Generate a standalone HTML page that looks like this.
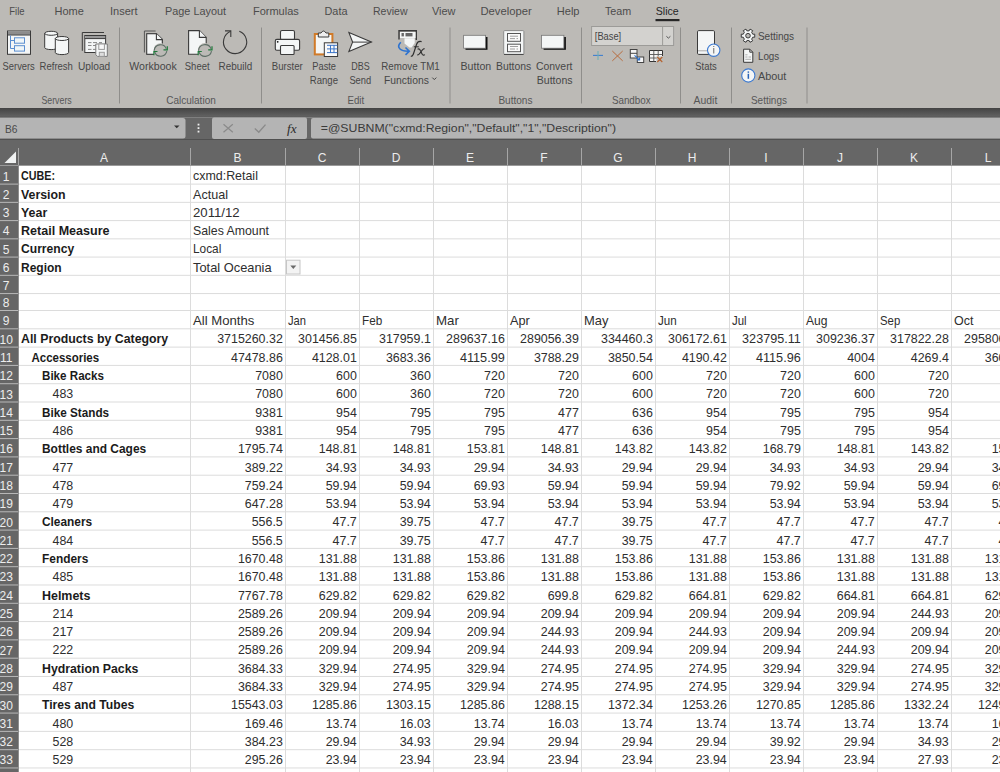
<!DOCTYPE html><html><head><meta charset="utf-8"><style>html,body{margin:0;padding:0;overflow:hidden;background:#fff}svg{display:block}text{font-family:"Liberation Sans",sans-serif}</style></head><body>
<svg width="1000" height="772" viewBox="0 0 1000 772">
<rect x="0" y="0" width="1000" height="108" fill="#bcbab6"/>
<text x="9.25" y="14.90" font-size="11" fill="#4c4c4c" font-weight="normal" textLength="15.25" lengthAdjust="spacingAndGlyphs">File</text>
<text x="54.50" y="14.90" font-size="11" fill="#4c4c4c" font-weight="normal" textLength="29.30" lengthAdjust="spacingAndGlyphs">Home</text>
<text x="110.00" y="14.90" font-size="11" fill="#4c4c4c" font-weight="normal" textLength="27.50" lengthAdjust="spacingAndGlyphs">Insert</text>
<text x="165.00" y="14.90" font-size="11" fill="#4c4c4c" font-weight="normal" textLength="61.00" lengthAdjust="spacingAndGlyphs">Page Layout</text>
<text x="253.00" y="14.90" font-size="11" fill="#4c4c4c" font-weight="normal" textLength="45.75" lengthAdjust="spacingAndGlyphs">Formulas</text>
<text x="324.50" y="14.90" font-size="11" fill="#4c4c4c" font-weight="normal" textLength="23.00" lengthAdjust="spacingAndGlyphs">Data</text>
<text x="373.00" y="14.90" font-size="11" fill="#4c4c4c" font-weight="normal" textLength="34.50" lengthAdjust="spacingAndGlyphs">Review</text>
<text x="432.00" y="14.90" font-size="11" fill="#4c4c4c" font-weight="normal" textLength="23.50" lengthAdjust="spacingAndGlyphs">View</text>
<text x="480.50" y="14.90" font-size="11" fill="#4c4c4c" font-weight="normal" textLength="51.25" lengthAdjust="spacingAndGlyphs">Developer</text>
<text x="556.75" y="14.90" font-size="11" fill="#4c4c4c" font-weight="normal" textLength="22.75" lengthAdjust="spacingAndGlyphs">Help</text>
<text x="605.00" y="14.90" font-size="11" fill="#4c4c4c" font-weight="normal" textLength="26.25" lengthAdjust="spacingAndGlyphs">Team</text>
<text x="655.75" y="14.90" font-size="11" fill="#262626" font-weight="normal" textLength="23.00" lengthAdjust="spacingAndGlyphs">Slice</text>
<rect x="655.5" y="19" width="24" height="2.2" fill="#262626"/>
<text x="2.60" y="69.80" font-size="10.5" fill="#474747" font-weight="normal" textLength="32.20" lengthAdjust="spacingAndGlyphs">Servers</text>
<text x="39.60" y="69.80" font-size="10.5" fill="#474747" font-weight="normal" textLength="33.30" lengthAdjust="spacingAndGlyphs">Refresh</text>
<text x="78.00" y="69.80" font-size="10.5" fill="#474747" font-weight="normal" textLength="32.20" lengthAdjust="spacingAndGlyphs">Upload</text>
<text x="129.30" y="69.80" font-size="10.5" fill="#474747" font-weight="normal" textLength="47.40" lengthAdjust="spacingAndGlyphs">Workbook</text>
<text x="184.80" y="69.80" font-size="10.5" fill="#474747" font-weight="normal" textLength="24.80" lengthAdjust="spacingAndGlyphs">Sheet</text>
<text x="218.60" y="69.80" font-size="10.5" fill="#474747" font-weight="normal" textLength="33.60" lengthAdjust="spacingAndGlyphs">Rebuild</text>
<text x="271.80" y="69.80" font-size="10.5" fill="#474747" font-weight="normal" textLength="31.00" lengthAdjust="spacingAndGlyphs">Burster</text>
<text x="312.30" y="69.80" font-size="10.5" fill="#474747" font-weight="normal" textLength="23.70" lengthAdjust="spacingAndGlyphs">Paste</text>
<text x="309.80" y="83.80" font-size="10.5" fill="#474747" font-weight="normal" textLength="28.20" lengthAdjust="spacingAndGlyphs">Range</text>
<text x="351.30" y="69.80" font-size="10.5" fill="#474747" font-weight="normal" textLength="18.40" lengthAdjust="spacingAndGlyphs">DBS</text>
<text x="349.40" y="83.80" font-size="10.5" fill="#474747" font-weight="normal" textLength="21.80" lengthAdjust="spacingAndGlyphs">Send</text>
<text x="381.30" y="69.80" font-size="10.5" fill="#474747" font-weight="normal" textLength="58.40" lengthAdjust="spacingAndGlyphs">Remove TM1</text>
<text x="384.00" y="83.80" font-size="10.5" fill="#474747" font-weight="normal" textLength="44.80" lengthAdjust="spacingAndGlyphs">Functions</text>
<text x="460.50" y="69.80" font-size="10.5" fill="#474747" font-weight="normal" textLength="30.70" lengthAdjust="spacingAndGlyphs">Button</text>
<text x="496.00" y="69.80" font-size="10.5" fill="#474747" font-weight="normal" textLength="35.20" lengthAdjust="spacingAndGlyphs">Buttons</text>
<text x="536.00" y="69.80" font-size="10.5" fill="#474747" font-weight="normal" textLength="36.50" lengthAdjust="spacingAndGlyphs">Convert</text>
<text x="536.80" y="83.80" font-size="10.5" fill="#474747" font-weight="normal" textLength="35.70" lengthAdjust="spacingAndGlyphs">Buttons</text>
<text x="695.30" y="69.80" font-size="10.5" fill="#474747" font-weight="normal" textLength="21.40" lengthAdjust="spacingAndGlyphs">Stats</text>
<text x="757.90" y="40.10" font-size="10.5" fill="#474747" font-weight="normal" textLength="36.20" lengthAdjust="spacingAndGlyphs">Settings</text>
<text x="757.90" y="60.00" font-size="10.5" fill="#474747" font-weight="normal" textLength="21.40" lengthAdjust="spacingAndGlyphs">Logs</text>
<text x="757.90" y="79.70" font-size="10.5" fill="#474747" font-weight="normal" textLength="28.40" lengthAdjust="spacingAndGlyphs">About</text>
<path d="M432.3 77.6 L434.3 79.6 L436.3 77.6" fill="none" stroke="#444" stroke-width="1"/>
<text x="41.40" y="103.60" font-size="10.5" fill="#565656" font-weight="normal" textLength="30.40" lengthAdjust="spacingAndGlyphs">Servers</text>
<text x="166.20" y="103.60" font-size="10.5" fill="#565656" font-weight="normal" textLength="49.60" lengthAdjust="spacingAndGlyphs">Calculation</text>
<text x="347.50" y="103.60" font-size="10.5" fill="#565656" font-weight="normal" textLength="16.70" lengthAdjust="spacingAndGlyphs">Edit</text>
<text x="498.40" y="103.60" font-size="10.5" fill="#565656" font-weight="normal" textLength="34.10" lengthAdjust="spacingAndGlyphs">Buttons</text>
<text x="611.90" y="103.60" font-size="10.5" fill="#565656" font-weight="normal" textLength="38.70" lengthAdjust="spacingAndGlyphs">Sandbox</text>
<text x="693.60" y="103.60" font-size="10.5" fill="#565656" font-weight="normal" textLength="23.70" lengthAdjust="spacingAndGlyphs">Audit</text>
<text x="751.00" y="103.60" font-size="10.5" fill="#565656" font-weight="normal" textLength="35.90" lengthAdjust="spacingAndGlyphs">Settings</text>
<rect x="119.0" y="27.5" width="1" height="76" fill="#8f8e8b"/>
<rect x="261.0" y="27.5" width="1" height="76" fill="#8f8e8b"/>
<rect x="449.5" y="27.5" width="1" height="76" fill="#8f8e8b"/>
<rect x="581.0" y="27.5" width="1" height="76" fill="#8f8e8b"/>
<rect x="680.0" y="27.5" width="1" height="76" fill="#8f8e8b"/>
<rect x="731.0" y="27.5" width="1" height="76" fill="#8f8e8b"/>
<rect x="806.5" y="27.5" width="1" height="76" fill="#8f8e8b"/>
<rect x="7.5" y="31" width="23" height="23.3" fill="#f4f6f6" stroke="#3a3a3a" stroke-width="1"/>
<rect x="8" y="31.5" width="22" height="3.3" fill="#8c8c8c"/>
<line x1="7.5" y1="35" x2="30.5" y2="35" stroke="#3a3a3a" stroke-width="1"/>
<path d="M10.5 35.5 V48.5 H14.5 M10.5 40.5 H14.5" fill="none" stroke="#5b8fd0" stroke-width="1"/>
<rect x="14.5" y="37.8" width="10" height="5.4" fill="#f0f6f8" stroke="#5b8fd0" stroke-width="1"/>
<rect x="14.5" y="45.7" width="10" height="5.4" fill="#f0f6f8" stroke="#5b8fd0" stroke-width="1"/>
<path d="M44.7 33.3 V47.6 A6.449999999999999 2 0 0 0 57.6 47.6 V33.3 A6.449999999999999 2 0 0 0 44.7 33.3 Z" fill="#f4f6f6" stroke="#3a3a3a" stroke-width="1"/>
<path d="M44.7 33.3 A6.449999999999999 2 0 0 0 57.6 33.3" fill="none" stroke="#3a3a3a" stroke-width="1"/>
<path d="M55.3 38.5 V52.6 A6.649999999999999 2 0 0 0 68.6 52.6 V38.5 A6.649999999999999 2 0 0 0 55.3 38.5 Z" fill="#f4f6f6" stroke="#3a3a3a" stroke-width="1"/>
<path d="M55.3 38.5 A6.649999999999999 2 0 0 0 68.6 38.5" fill="none" stroke="#3a3a3a" stroke-width="1"/>
<path d="M82.3 50.8 V32.5 H104" fill="none" stroke="#3a3a3a" stroke-width="1"/>
<rect x="84.8" y="35.5" width="20.8" height="17" fill="#f4f6f6" stroke="#3a3a3a" stroke-width="1"/>
<rect x="85.3" y="36" width="19.8" height="2.6" fill="#9a9a9a"/>
<line x1="84.8" y1="38.6" x2="105.6" y2="38.6" stroke="#3a3a3a" stroke-width="1"/>
<path d="M88 42.6 H91.5 M93 42.6 H97" stroke="#888" stroke-width="1"/>
<path d="M88 45.5 H91.5 M93 45.5 H97" stroke="#888" stroke-width="1"/>
<path d="M88 49.4 H91.5 M93 49.4 H97" stroke="#888" stroke-width="1"/>
<path d="M99 42.6 H102" stroke="#888" stroke-width="1"/>
<path d="M95.8 44 H107.3 V56.4 H97.5 L95.8 54.7 Z" fill="#f4f6f6" stroke="#7a7a7a" stroke-width="1"/>
<rect x="98.8" y="44" width="5.6" height="5.4" fill="#f8f8f8" stroke="#9a9a9a" stroke-width="1"/>
<rect x="99.3" y="52.3" width="5" height="4.1" fill="#ddd" stroke="#9a9a9a" stroke-width="1"/>
<path d="M144.4 52.5 V31 H155.6" fill="none" stroke="#555" stroke-width="1"/>
<path d="M146.7 33.7 H156.4 L162.3 39.6 V45 M154 54.3 H146.7 Z" fill="#f4f6f6" stroke="#3a3a3a" stroke-width="1.1"/>
<path d="M146.7 33.7 H156.4 L162.3 39.6 V43.5 L154 54.3 H146.7 Z" fill="#f4f6f6" stroke="none"/>
<path d="M154 54.3 H146.7 V33.7 H156.4 L162.3 39.6 V43.5" fill="none" stroke="#3a3a3a" stroke-width="1.1"/>
<path d="M156.4 33.7 V39.6 H162.3" fill="#f4f6f6" stroke="#3a3a3a" stroke-width="1.1"/>
<circle cx="160.5" cy="50.2" r="6.8999999999999995" fill="#bcbab6"/>
<path d="M154.2 50.7 A6.3 6.3 0 0 1 166.3 48.7" fill="none" stroke="#5e6e66" stroke-width="1.1"/>
<path d="M166.8 51.2 A6.3 6.3 0 0 1 154.7 52.0" fill="none" stroke="#5e6e66" stroke-width="1.1"/>
<path d="M167.3 46.2 V49.9 H163.5" fill="none" stroke="#1e7a3a" stroke-width="1.2"/>
<path d="M153.9 55.2 V51.5 H157.5" fill="none" stroke="#1e7a3a" stroke-width="1.2"/>
<path d="M198 54.3 H188.6 V30.6 H199.4 L206.2 37.4 V44" fill="#f4f6f6" stroke="#3a3a3a" stroke-width="1.1"/>
<path d="M199.4 30.6 V37.4 H206.2" fill="#f4f6f6" stroke="#3a3a3a" stroke-width="1.1"/>
<circle cx="205" cy="50.2" r="7.1" fill="#bcbab6"/>
<path d="M198.5 50.7 A6.5 6.5 0 0 1 211.0 48.7" fill="none" stroke="#5e6e66" stroke-width="1.1"/>
<path d="M211.5 51.2 A6.5 6.5 0 0 1 199.0 52.0" fill="none" stroke="#5e6e66" stroke-width="1.1"/>
<path d="M212.0 46.2 V49.9 H208.2" fill="none" stroke="#1e7a3a" stroke-width="1.2"/>
<path d="M198.2 55.2 V51.5 H201.8" fill="none" stroke="#1e7a3a" stroke-width="1.2"/>
<path d="M239.3 31.2 A11.6 11.6 0 1 1 230.6 31.3" fill="none" stroke="#3a3a3a" stroke-width="1.1"/>
<path d="M225 30.9 H230.8 V37" fill="none" stroke="#3a3a3a" stroke-width="1.1"/>
<rect x="280.5" y="30.5" width="14" height="9.2" rx="1.5" fill="#f4f6f6" stroke="#3a3a3a" stroke-width="1.1"/>
<rect x="275.3" y="39.4" width="24.3" height="10.8" rx="1.5" fill="#f4f6f6" stroke="#3a3a3a" stroke-width="1.1"/>
<rect x="280.5" y="45.5" width="13.6" height="9" rx="1" fill="#f4f6f6" stroke="#3a3a3a" stroke-width="1.1"/>
<circle cx="277.7" cy="41.8" r="0.9" fill="#111"/>
<rect x="314.8" y="34" width="17.6" height="20.4" fill="#f4f6f6" stroke="#d07a28" stroke-width="2"/>
<path d="M318.3 37 V33 H321 Q323.5 29 326 33 H328.8 V37 Z" fill="#eee" stroke="#3a3a3a" stroke-width="1"/>
<rect x="324.3" y="42.8" width="13.3" height="13.7" fill="#fafafa" stroke="#3a3a3a" stroke-width="1"/>
<path d="M327 45.3 H337.3 M327 48.9 H337.3 M327 52.6 H337.3 M330.5 45 V53 M334 45 V53" fill="none" stroke="#3c75c8" stroke-width="1"/>
<path d="M348.9 32.6 L371.4 42.1 L348.9 51.4 L352.6 42.1 Z" fill="#f4f6f6" stroke="#3a3a3a" stroke-width="1.1" stroke-linejoin="miter"/>
<line x1="352.6" y1="42.1" x2="371.4" y2="42.1" stroke="#3a3a3a" stroke-width="1"/>
<path d="M399 39.5 V30.8 H416.3 V40" fill="none" stroke="#3a3a3a" stroke-width="1.4"/>
<rect x="400" y="32" width="15.5" height="6" fill="#f4f6f6"/>
<rect x="401.5" y="33" width="2.4" height="3.4" fill="#666"/><rect x="405.5" y="33" width="7" height="3.4" fill="#666"/>
<path d="M404.5 38.2 H414.7 V43 L411.5 47.5 H409.5 L404.5 43.5 Z" fill="#f4f6f6"/>
<path d="M400.8 42.2 Q397 46 400 49 Q402.5 51.5 409 51.2 M405.5 47.5 L409.3 51.2 L405.5 54.8" fill="none" stroke="#2f74d0" stroke-width="1.6"/>
<path d="M410.8 56.2 Q412.8 56.6 413.9 52.5 L416.6 44.2 Q417.9 40.6 421.6 41.6" fill="none" stroke="#2e2e2e" stroke-width="1.15"/>
<path d="M413.8 46.8 H418.8" fill="none" stroke="#2e2e2e" stroke-width="1"/>
<path d="M417.6 49.2 Q419.3 48.2 420.2 50.2 L422.2 54.2 Q423.2 55.8 424.9 54.6 M424.6 48.6 Q423.4 48.6 422.2 50.2 L419.4 53.8 Q418.4 55.2 417.3 54.8" fill="none" stroke="#2e2e2e" stroke-width="1.1"/>
<rect x="465.5" y="37" width="22" height="12.8" fill="#111"/>
<rect x="463.6" y="35.3" width="22" height="12.9" fill="#f4f6f6" stroke="#777" stroke-width="0.8"/>
<rect x="503.7" y="30.6" width="20.2" height="23.9" rx="1" fill="#f4f6f6" stroke="#8a8a8a" stroke-width="1"/>
<line x1="504" y1="54.4" x2="523.6" y2="54.4" stroke="#444" stroke-width="1"/>
<rect x="507.5" y="33.5" width="13" height="7.8" fill="#fafafa" stroke="#555" stroke-width="1"/>
<rect x="507.5" y="44.2" width="13" height="7.5" fill="#fafafa" stroke="#555" stroke-width="1"/>
<path d="M510 36.2 H518 M510 38.6 H515 M516.5 38.6 H518 M510 46.5 H518 M510 49 H515 M516.5 49 H518" stroke="#888" stroke-width="0.8"/>
<rect x="543.6" y="37" width="22.3" height="12.8" fill="#111"/>
<rect x="541.6" y="35.3" width="22.3" height="12.9" fill="#f4f6f6" stroke="#777" stroke-width="0.8"/>
<rect x="591.6" y="26.5" width="82" height="19" fill="#d3d2cf" stroke="#9c9b98" stroke-width="1"/>
<line x1="662.6" y1="27" x2="662.6" y2="45.5" stroke="#9c9b98" stroke-width="1"/>
<path d="M666.4 36.3 L668.4 38.1 L670.4 36.3" fill="none" stroke="#555" stroke-width="1"/>
<text x="594.80" y="40.30" font-size="11" fill="#444" font-weight="normal" textLength="26.40" lengthAdjust="spacingAndGlyphs">[Base]</text>
<path d="M593 55.4 H603" stroke="#3f7fd0" stroke-width="1.1"/><path d="M598 51 V60" stroke="#6fb0b8" stroke-width="1.1"/>
<path d="M612.3 51 L622.7 60.9 M622.7 51 L612.3 60.9" stroke="#b86c3e" stroke-width="1"/>
<rect x="630.3" y="49.5" width="6.7" height="8.5" fill="#f4f4f4" stroke="#444" stroke-width="1"/><line x1="630.3" y1="53.3" x2="637" y2="53.3" stroke="#444" stroke-width="1"/>
<rect x="637.3" y="57" width="6.4" height="5.5" fill="#f4f4f4" stroke="#444" stroke-width="1"/>
<path d="M634.5 55.3 L639.5 59.8 M639.6 57.5 V59.9 H637.2" fill="none" stroke="#2f74d0" stroke-width="1.1"/>
<rect x="649.5" y="50.5" width="13" height="11" fill="#f6f6f6"/>
<path d="M649.5 61.5 V50.5 H662.5 V56 M649.5 61.5 H656" fill="none" stroke="#333" stroke-width="1"/>
<path d="M649.5 54.5 H662.5 M649.5 58 H657 M653.8 50.5 V61.5 M658.2 50.5 V56.5" stroke="#555" stroke-width="0.9"/>
<rect x="656.5" y="56.5" width="7" height="6" fill="#bcbab6"/>
<path d="M657.3 57 L662.3 62 M662.3 57 L657.3 62" stroke="#b4622e" stroke-width="1.1"/>
<circle cx="659.8" cy="59.5" r="0.9" fill="#b4622e"/>
<rect x="697.5" y="30.6" width="17" height="23.8" rx="1.2" fill="#f4f6f6" stroke="#3a3a3a" stroke-width="1"/>
<line x1="698" y1="50.8" x2="714" y2="50.8" stroke="#aaa" stroke-width="1"/>
<circle cx="713.7" cy="50.2" r="6.2" fill="#f4f6f6" stroke="#3d7ad0" stroke-width="1.1"/>
<rect x="713.2" y="48" width="1.1" height="5.5" fill="#777"/><rect x="713.2" y="46" width="1.1" height="1" fill="#777"/>
<path d="M754.72 34.15 L754.72 37.25 L752.78 37.16 L751.66 39.11 L752.71 40.75 L750.02 42.30 L749.12 40.57 L746.88 40.57 L745.98 42.30 L743.29 40.75 L744.34 39.11 L743.22 37.16 L741.28 37.25 L741.28 34.15 L743.22 34.24 L744.34 32.29 L743.29 30.65 L745.98 29.10 L746.88 30.83 L749.12 30.83 L750.02 29.10 L752.71 30.65 L751.66 32.29 L752.78 34.24 Z" fill="#f4f6f6" stroke="#3a3a3a" stroke-width="1" stroke-linejoin="round"/>
<circle cx="748" cy="35.7" r="2.3" fill="#bcbab6" stroke="#3a3a3a" stroke-width="1"/>
<path d="M743.6 49.2 H749.8 L752.8 52.2 V62.3 H743.6 Z" fill="#f4f6f6" stroke="#3a3a3a" stroke-width="1"/>
<path d="M749.8 49.2 V52.2 H752.8" fill="none" stroke="#3a3a3a" stroke-width="1"/>
<path d="M745.3 54.8 H747.5 M745.3 57 H747.5 M748.5 57 H751 M745.3 59.3 H751" stroke="#999" stroke-width="0.8"/>
<circle cx="748.3" cy="75.5" r="6.6" fill="#f4f6f6" stroke="#3d7ad0" stroke-width="1.1"/>
<rect x="747.6" y="73.8" width="1.5" height="5" fill="#2a64b8"/><rect x="747.6" y="71.4" width="1.5" height="1.4" fill="#2a64b8"/>
<defs><linearGradient id="band" x1="0" y1="0" x2="0" y2="1"><stop offset="0" stop-color="#434343"/><stop offset="1" stop-color="#646464"/></linearGradient></defs>
<rect x="0" y="108" width="1000" height="9" fill="url(#band)"/>
<rect x="0" y="116.6" width="1000" height="1" fill="#575757"/>
<rect x="0" y="117.5" width="1000" height="48" fill="#666"/>
<path d="M0 118 H183 Q185.5 118 185.5 120.5 V136 Q185.5 138.5 183 138.5 H0 Z" fill="#b4b4b4"/>
<text x="5.00" y="132.70" font-size="11.5" fill="#4a4a4a" font-weight="normal" textLength="12.50" lengthAdjust="spacingAndGlyphs">B6</text>
<path d="M174 125.5 H179.5 L176.75 128.3 Z" fill="#333"/>
<rect x="197.6" y="123.69999999999999" width="1.8" height="1.8" fill="#eee"/>
<rect x="197.6" y="127.19999999999999" width="1.8" height="1.8" fill="#eee"/>
<rect x="197.6" y="130.7" width="1.8" height="1.8" fill="#eee"/>
<rect x="212" y="117.5" width="95" height="21.5" rx="2" fill="#b4b4b4"/>
<path d="M223.5 124.2 L232.8 132.3 M232.8 124.2 L223.5 132.3" stroke="#8a8a8a" stroke-width="1.2"/>
<path d="M254.8 128.5 L258.8 132.2 L265.5 124.6" fill="none" stroke="#8a8a8a" stroke-width="1.4"/>
<text x="287" y="132.6" font-size="13" font-style="italic" fill="#2a2a2a" style="font-family:Liberation Serif,serif" textLength="9.5" lengthAdjust="spacingAndGlyphs">fx</text>
<path d="M313 118 H1000 V138.5 H313 Q311 138.5 311 136.5 V120 Q311 118 313 118 Z" fill="#b4b4b4"/>
<text x="320.80" y="132.40" font-size="11.5" fill="#3a3a3a" font-weight="normal" textLength="295.20" lengthAdjust="spacingAndGlyphs">=@SUBNM(&quot;cxmd:Region&quot;,&quot;Default&quot;,&quot;1&quot;,&quot;Description&quot;)</text>
<rect x="0" y="139" width="1000" height="1" fill="#505050"/>
<rect x="18" y="166" width="982" height="606" fill="#ffffff"/>
<rect x="0" y="166" width="18" height="606" fill="#666"/>
<rect x="19" y="183.61" width="981" height="1" fill="#dcdcdc"/>
<rect x="0" y="183.61" width="18" height="1" fill="#b8b8b8"/>
<rect x="19" y="201.85" width="981" height="1" fill="#dcdcdc"/>
<rect x="0" y="201.85" width="18" height="1" fill="#b8b8b8"/>
<rect x="19" y="220.10" width="981" height="1" fill="#dcdcdc"/>
<rect x="0" y="220.10" width="18" height="1" fill="#b8b8b8"/>
<rect x="19" y="238.34" width="981" height="1" fill="#dcdcdc"/>
<rect x="0" y="238.34" width="18" height="1" fill="#b8b8b8"/>
<rect x="19" y="256.58" width="981" height="1" fill="#dcdcdc"/>
<rect x="0" y="256.58" width="18" height="1" fill="#b8b8b8"/>
<rect x="19" y="274.82" width="981" height="1" fill="#dcdcdc"/>
<rect x="0" y="274.82" width="18" height="1" fill="#b8b8b8"/>
<rect x="19" y="293.06" width="981" height="1" fill="#dcdcdc"/>
<rect x="0" y="293.06" width="18" height="1" fill="#b8b8b8"/>
<rect x="19" y="310.01" width="981" height="1" fill="#dcdcdc"/>
<rect x="0" y="310.01" width="18" height="1" fill="#b8b8b8"/>
<rect x="19" y="328.31" width="981" height="1" fill="#dcdcdc"/>
<rect x="0" y="328.31" width="18" height="1" fill="#b8b8b8"/>
<rect x="19" y="346.61" width="981" height="1" fill="#dcdcdc"/>
<rect x="0" y="346.61" width="18" height="1" fill="#b8b8b8"/>
<rect x="19" y="364.91" width="981" height="1" fill="#dcdcdc"/>
<rect x="0" y="364.91" width="18" height="1" fill="#b8b8b8"/>
<rect x="19" y="383.21" width="981" height="1" fill="#dcdcdc"/>
<rect x="0" y="383.21" width="18" height="1" fill="#b8b8b8"/>
<rect x="19" y="401.50" width="981" height="1" fill="#dcdcdc"/>
<rect x="0" y="401.50" width="18" height="1" fill="#b8b8b8"/>
<rect x="19" y="419.80" width="981" height="1" fill="#dcdcdc"/>
<rect x="0" y="419.80" width="18" height="1" fill="#b8b8b8"/>
<rect x="19" y="438.10" width="981" height="1" fill="#dcdcdc"/>
<rect x="0" y="438.10" width="18" height="1" fill="#b8b8b8"/>
<rect x="19" y="456.40" width="981" height="1" fill="#dcdcdc"/>
<rect x="0" y="456.40" width="18" height="1" fill="#b8b8b8"/>
<rect x="19" y="474.70" width="981" height="1" fill="#dcdcdc"/>
<rect x="0" y="474.70" width="18" height="1" fill="#b8b8b8"/>
<rect x="19" y="492.99" width="981" height="1" fill="#dcdcdc"/>
<rect x="0" y="492.99" width="18" height="1" fill="#b8b8b8"/>
<rect x="19" y="511.29" width="981" height="1" fill="#dcdcdc"/>
<rect x="0" y="511.29" width="18" height="1" fill="#b8b8b8"/>
<rect x="19" y="529.59" width="981" height="1" fill="#dcdcdc"/>
<rect x="0" y="529.59" width="18" height="1" fill="#b8b8b8"/>
<rect x="19" y="547.89" width="981" height="1" fill="#dcdcdc"/>
<rect x="0" y="547.89" width="18" height="1" fill="#b8b8b8"/>
<rect x="19" y="566.19" width="981" height="1" fill="#dcdcdc"/>
<rect x="0" y="566.19" width="18" height="1" fill="#b8b8b8"/>
<rect x="19" y="584.48" width="981" height="1" fill="#dcdcdc"/>
<rect x="0" y="584.48" width="18" height="1" fill="#b8b8b8"/>
<rect x="19" y="602.78" width="981" height="1" fill="#dcdcdc"/>
<rect x="0" y="602.78" width="18" height="1" fill="#b8b8b8"/>
<rect x="19" y="621.08" width="981" height="1" fill="#dcdcdc"/>
<rect x="0" y="621.08" width="18" height="1" fill="#b8b8b8"/>
<rect x="19" y="639.38" width="981" height="1" fill="#dcdcdc"/>
<rect x="0" y="639.38" width="18" height="1" fill="#b8b8b8"/>
<rect x="19" y="657.68" width="981" height="1" fill="#dcdcdc"/>
<rect x="0" y="657.68" width="18" height="1" fill="#b8b8b8"/>
<rect x="19" y="675.97" width="981" height="1" fill="#dcdcdc"/>
<rect x="0" y="675.97" width="18" height="1" fill="#b8b8b8"/>
<rect x="19" y="694.27" width="981" height="1" fill="#dcdcdc"/>
<rect x="0" y="694.27" width="18" height="1" fill="#b8b8b8"/>
<rect x="19" y="712.57" width="981" height="1" fill="#dcdcdc"/>
<rect x="0" y="712.57" width="18" height="1" fill="#b8b8b8"/>
<rect x="19" y="730.87" width="981" height="1" fill="#dcdcdc"/>
<rect x="0" y="730.87" width="18" height="1" fill="#b8b8b8"/>
<rect x="19" y="749.17" width="981" height="1" fill="#dcdcdc"/>
<rect x="0" y="749.17" width="18" height="1" fill="#b8b8b8"/>
<rect x="19" y="767.46" width="981" height="1" fill="#dcdcdc"/>
<rect x="0" y="767.46" width="18" height="1" fill="#b8b8b8"/>
<rect x="190" y="166" width="1" height="606" fill="#dcdcdc"/>
<rect x="190" y="148" width="1" height="17" fill="#a6a6a6"/>
<rect x="285" y="166" width="1" height="606" fill="#dcdcdc"/>
<rect x="285" y="148" width="1" height="17" fill="#a6a6a6"/>
<rect x="359" y="166" width="1" height="606" fill="#dcdcdc"/>
<rect x="359" y="148" width="1" height="17" fill="#a6a6a6"/>
<rect x="433" y="166" width="1" height="606" fill="#dcdcdc"/>
<rect x="433" y="148" width="1" height="17" fill="#a6a6a6"/>
<rect x="507" y="166" width="1" height="606" fill="#dcdcdc"/>
<rect x="507" y="148" width="1" height="17" fill="#a6a6a6"/>
<rect x="581" y="166" width="1" height="606" fill="#dcdcdc"/>
<rect x="581" y="148" width="1" height="17" fill="#a6a6a6"/>
<rect x="655" y="166" width="1" height="606" fill="#dcdcdc"/>
<rect x="655" y="148" width="1" height="17" fill="#a6a6a6"/>
<rect x="729" y="166" width="1" height="606" fill="#dcdcdc"/>
<rect x="729" y="148" width="1" height="17" fill="#a6a6a6"/>
<rect x="803" y="166" width="1" height="606" fill="#dcdcdc"/>
<rect x="803" y="148" width="1" height="17" fill="#a6a6a6"/>
<rect x="877" y="166" width="1" height="606" fill="#dcdcdc"/>
<rect x="877" y="148" width="1" height="17" fill="#a6a6a6"/>
<rect x="951" y="166" width="1" height="606" fill="#dcdcdc"/>
<rect x="951" y="148" width="1" height="17" fill="#a6a6a6"/>
<rect x="18" y="148" width="1" height="17" fill="#a6a6a6"/>
<rect x="0" y="165" width="1000" height="1" fill="#9a9a9a"/>
<rect x="18" y="165" width="1" height="607" fill="#8e8e8e"/>
<path d="M4.5 163 L16 151.5 V163 Z" fill="#f0f2f2"/>
<text x="104.0" y="161.9" font-size="12" fill="#ededed" text-anchor="middle">A</text>
<text x="237.5" y="161.9" font-size="12" fill="#ededed" text-anchor="middle">B</text>
<text x="322.0" y="161.9" font-size="12" fill="#ededed" text-anchor="middle">C</text>
<text x="396.0" y="161.9" font-size="12" fill="#ededed" text-anchor="middle">D</text>
<text x="470.0" y="161.9" font-size="12" fill="#ededed" text-anchor="middle">E</text>
<text x="544.0" y="161.9" font-size="12" fill="#ededed" text-anchor="middle">F</text>
<text x="618.0" y="161.9" font-size="12" fill="#ededed" text-anchor="middle">G</text>
<text x="692.0" y="161.9" font-size="12" fill="#ededed" text-anchor="middle">H</text>
<text x="766.0" y="161.9" font-size="12" fill="#ededed" text-anchor="middle">I</text>
<text x="840.0" y="161.9" font-size="12" fill="#ededed" text-anchor="middle">J</text>
<text x="914.0" y="161.9" font-size="12" fill="#ededed" text-anchor="middle">K</text>
<text x="988.0" y="161.9" font-size="12" fill="#ededed" text-anchor="middle">L</text>
<text x="6.2" y="180.61" font-size="12" fill="#ededed" text-anchor="middle">1</text>
<text x="6.2" y="198.85" font-size="12" fill="#ededed" text-anchor="middle">2</text>
<text x="6.2" y="217.10" font-size="12" fill="#ededed" text-anchor="middle">3</text>
<text x="6.2" y="235.34" font-size="12" fill="#ededed" text-anchor="middle">4</text>
<text x="6.2" y="253.58" font-size="12" fill="#ededed" text-anchor="middle">5</text>
<text x="6.2" y="271.82" font-size="12" fill="#ededed" text-anchor="middle">6</text>
<text x="6.2" y="290.06" font-size="12" fill="#ededed" text-anchor="middle">7</text>
<text x="6.2" y="307.01" font-size="12" fill="#ededed" text-anchor="middle">8</text>
<text x="6.2" y="325.31" font-size="12" fill="#ededed" text-anchor="middle">9</text>
<text x="6.2" y="343.61" font-size="12" fill="#ededed" text-anchor="middle">10</text>
<text x="6.2" y="361.91" font-size="12" fill="#ededed" text-anchor="middle">11</text>
<text x="6.2" y="380.21" font-size="12" fill="#ededed" text-anchor="middle">12</text>
<text x="6.2" y="398.50" font-size="12" fill="#ededed" text-anchor="middle">13</text>
<text x="6.2" y="416.80" font-size="12" fill="#ededed" text-anchor="middle">14</text>
<text x="6.2" y="435.10" font-size="12" fill="#ededed" text-anchor="middle">15</text>
<text x="6.2" y="453.40" font-size="12" fill="#ededed" text-anchor="middle">16</text>
<text x="6.2" y="471.70" font-size="12" fill="#ededed" text-anchor="middle">17</text>
<text x="6.2" y="489.99" font-size="12" fill="#ededed" text-anchor="middle">18</text>
<text x="6.2" y="508.29" font-size="12" fill="#ededed" text-anchor="middle">19</text>
<text x="6.2" y="526.59" font-size="12" fill="#ededed" text-anchor="middle">20</text>
<text x="6.2" y="544.89" font-size="12" fill="#ededed" text-anchor="middle">21</text>
<text x="6.2" y="563.19" font-size="12" fill="#ededed" text-anchor="middle">22</text>
<text x="6.2" y="581.48" font-size="12" fill="#ededed" text-anchor="middle">23</text>
<text x="6.2" y="599.78" font-size="12" fill="#ededed" text-anchor="middle">24</text>
<text x="6.2" y="618.08" font-size="12" fill="#ededed" text-anchor="middle">25</text>
<text x="6.2" y="636.38" font-size="12" fill="#ededed" text-anchor="middle">26</text>
<text x="6.2" y="654.68" font-size="12" fill="#ededed" text-anchor="middle">27</text>
<text x="6.2" y="672.97" font-size="12" fill="#ededed" text-anchor="middle">28</text>
<text x="6.2" y="691.27" font-size="12" fill="#ededed" text-anchor="middle">29</text>
<text x="6.2" y="709.57" font-size="12" fill="#ededed" text-anchor="middle">30</text>
<text x="6.2" y="727.87" font-size="12" fill="#ededed" text-anchor="middle">31</text>
<text x="6.2" y="746.17" font-size="12" fill="#ededed" text-anchor="middle">32</text>
<text x="6.2" y="764.46" font-size="12" fill="#ededed" text-anchor="middle">33</text>
<text x="21.0" y="180.41" font-size="12" font-weight="bold" fill="#1b1b1b" textLength="34.0" lengthAdjust="spacingAndGlyphs">CUBE:</text>
<text x="193.0" y="180.41" font-size="12.4" font-weight="normal" fill="#2e2e2e" textLength="64.9" lengthAdjust="spacingAndGlyphs">cxmd:Retail</text>
<text x="21.0" y="198.65" font-size="12" font-weight="bold" fill="#1b1b1b" textLength="44.6" lengthAdjust="spacingAndGlyphs">Version</text>
<text x="193.0" y="198.65" font-size="12.4" font-weight="normal" fill="#2e2e2e" textLength="35.0" lengthAdjust="spacingAndGlyphs">Actual</text>
<text x="21.0" y="216.90" font-size="12" font-weight="bold" fill="#1b1b1b" textLength="26.2" lengthAdjust="spacingAndGlyphs">Year</text>
<text x="193.0" y="216.90" font-size="12.4" font-weight="normal" fill="#2e2e2e" textLength="46.7" lengthAdjust="spacingAndGlyphs">2011/12</text>
<text x="21.0" y="235.14" font-size="12" font-weight="bold" fill="#1b1b1b" textLength="88.6" lengthAdjust="spacingAndGlyphs">Retail Measure</text>
<text x="193.0" y="235.14" font-size="12.4" font-weight="normal" fill="#2e2e2e" textLength="76.0" lengthAdjust="spacingAndGlyphs">Sales Amount</text>
<text x="21.0" y="253.38" font-size="12" font-weight="bold" fill="#1b1b1b" textLength="53.2" lengthAdjust="spacingAndGlyphs">Currency</text>
<text x="193.0" y="253.38" font-size="12.4" font-weight="normal" fill="#2e2e2e" textLength="28.3" lengthAdjust="spacingAndGlyphs">Local</text>
<text x="21.0" y="271.62" font-size="12" font-weight="bold" fill="#1b1b1b" textLength="40.6" lengthAdjust="spacingAndGlyphs">Region</text>
<text x="193.0" y="271.62" font-size="12.4" font-weight="normal" fill="#2e2e2e" textLength="78.6" lengthAdjust="spacingAndGlyphs">Total Oceania</text>
<rect x="286.5" y="260.2" width="13.5" height="13.8" fill="#f3f3f3" stroke="#c6c6c6" stroke-width="1"/>
<path d="M290.3 265.6 H296.3 L293.3 268.9 Z" fill="#6a6a6a"/>
<text x="193.0" y="325.11" font-size="12.4" font-weight="normal" fill="#2e2e2e" textLength="61.3" lengthAdjust="spacingAndGlyphs">All Months</text>
<text x="288.0" y="325.11" font-size="12.4" font-weight="normal" fill="#2e2e2e" textLength="18.0" lengthAdjust="spacingAndGlyphs">Jan</text>
<text x="362.0" y="325.11" font-size="12.4" font-weight="normal" fill="#2e2e2e" textLength="20.2" lengthAdjust="spacingAndGlyphs">Feb</text>
<text x="436.0" y="325.11" font-size="12.4" font-weight="normal" fill="#2e2e2e" textLength="22.9" lengthAdjust="spacingAndGlyphs">Mar</text>
<text x="510.0" y="325.11" font-size="12.4" font-weight="normal" fill="#2e2e2e" textLength="19.8" lengthAdjust="spacingAndGlyphs">Apr</text>
<text x="584.0" y="325.11" font-size="12.4" font-weight="normal" fill="#2e2e2e" textLength="24.4" lengthAdjust="spacingAndGlyphs">May</text>
<text x="658.0" y="325.11" font-size="12.4" font-weight="normal" fill="#2e2e2e" textLength="18.7" lengthAdjust="spacingAndGlyphs">Jun</text>
<text x="732.0" y="325.11" font-size="12.4" font-weight="normal" fill="#2e2e2e" textLength="14.6" lengthAdjust="spacingAndGlyphs">Jul</text>
<text x="806.0" y="325.11" font-size="12.4" font-weight="normal" fill="#2e2e2e" textLength="21.5" lengthAdjust="spacingAndGlyphs">Aug</text>
<text x="880.0" y="325.11" font-size="12.4" font-weight="normal" fill="#2e2e2e" textLength="20.2" lengthAdjust="spacingAndGlyphs">Sep</text>
<text x="954.0" y="325.11" font-size="12.4" font-weight="normal" fill="#2e2e2e" textLength="19.4" lengthAdjust="spacingAndGlyphs">Oct</text>
<text x="21.0" y="343.41" font-size="12" font-weight="bold" fill="#1b1b1b" textLength="147.2" lengthAdjust="spacingAndGlyphs">All Products by Category</text>
<text x="217.2" y="343.41" font-size="12.4" fill="#2e2e2e" textLength="65.6" lengthAdjust="spacingAndGlyphs">3715260.32</text>
<text x="298.1" y="343.41" font-size="12.4" fill="#2e2e2e" textLength="58.7" lengthAdjust="spacingAndGlyphs">301456.85</text>
<text x="379.0" y="343.41" font-size="12.4" fill="#2e2e2e" textLength="51.8" lengthAdjust="spacingAndGlyphs">317959.1</text>
<text x="446.1" y="343.41" font-size="12.4" fill="#2e2e2e" textLength="58.7" lengthAdjust="spacingAndGlyphs">289637.16</text>
<text x="520.1" y="343.41" font-size="12.4" fill="#2e2e2e" textLength="58.7" lengthAdjust="spacingAndGlyphs">289056.39</text>
<text x="601.0" y="343.41" font-size="12.4" fill="#2e2e2e" textLength="51.8" lengthAdjust="spacingAndGlyphs">334460.3</text>
<text x="668.1" y="343.41" font-size="12.4" fill="#2e2e2e" textLength="58.7" lengthAdjust="spacingAndGlyphs">306172.61</text>
<text x="742.1" y="343.41" font-size="12.4" fill="#2e2e2e" textLength="58.7" lengthAdjust="spacingAndGlyphs">323795.11</text>
<text x="816.1" y="343.41" font-size="12.4" fill="#2e2e2e" textLength="58.7" lengthAdjust="spacingAndGlyphs">309236.37</text>
<text x="890.1" y="343.41" font-size="12.4" fill="#2e2e2e" textLength="58.7" lengthAdjust="spacingAndGlyphs">317822.28</text>
<text x="964.1" y="343.41" font-size="12.4" fill="#2e2e2e" textLength="58.7" lengthAdjust="spacingAndGlyphs">295806.41</text>
<text x="31.5" y="361.71" font-size="12" font-weight="bold" fill="#1b1b1b" textLength="67.6" lengthAdjust="spacingAndGlyphs">Accessories</text>
<text x="231.0" y="361.71" font-size="12.4" fill="#2e2e2e" textLength="51.8" lengthAdjust="spacingAndGlyphs">47478.86</text>
<text x="311.9" y="361.71" font-size="12.4" fill="#2e2e2e" textLength="44.9" lengthAdjust="spacingAndGlyphs">4128.01</text>
<text x="385.9" y="361.71" font-size="12.4" fill="#2e2e2e" textLength="44.9" lengthAdjust="spacingAndGlyphs">3683.36</text>
<text x="459.9" y="361.71" font-size="12.4" fill="#2e2e2e" textLength="44.9" lengthAdjust="spacingAndGlyphs">4115.99</text>
<text x="533.9" y="361.71" font-size="12.4" fill="#2e2e2e" textLength="44.9" lengthAdjust="spacingAndGlyphs">3788.29</text>
<text x="607.9" y="361.71" font-size="12.4" fill="#2e2e2e" textLength="44.9" lengthAdjust="spacingAndGlyphs">3850.54</text>
<text x="681.9" y="361.71" font-size="12.4" fill="#2e2e2e" textLength="44.9" lengthAdjust="spacingAndGlyphs">4190.42</text>
<text x="755.9" y="361.71" font-size="12.4" fill="#2e2e2e" textLength="44.9" lengthAdjust="spacingAndGlyphs">4115.96</text>
<text x="847.2" y="361.71" font-size="12.4" fill="#2e2e2e" textLength="27.6" lengthAdjust="spacingAndGlyphs">4004</text>
<text x="910.8" y="361.71" font-size="12.4" fill="#2e2e2e" textLength="38.0" lengthAdjust="spacingAndGlyphs">4269.4</text>
<text x="984.8" y="361.71" font-size="12.4" fill="#2e2e2e" textLength="38.0" lengthAdjust="spacingAndGlyphs">3602.4</text>
<text x="42.0" y="380.01" font-size="12" font-weight="bold" fill="#1b1b1b" textLength="62.0" lengthAdjust="spacingAndGlyphs">Bike Racks</text>
<text x="255.2" y="380.01" font-size="12.4" fill="#2e2e2e" textLength="27.6" lengthAdjust="spacingAndGlyphs">7080</text>
<text x="336.1" y="380.01" font-size="12.4" fill="#2e2e2e" textLength="20.7" lengthAdjust="spacingAndGlyphs">600</text>
<text x="410.1" y="380.01" font-size="12.4" fill="#2e2e2e" textLength="20.7" lengthAdjust="spacingAndGlyphs">360</text>
<text x="484.1" y="380.01" font-size="12.4" fill="#2e2e2e" textLength="20.7" lengthAdjust="spacingAndGlyphs">720</text>
<text x="558.1" y="380.01" font-size="12.4" fill="#2e2e2e" textLength="20.7" lengthAdjust="spacingAndGlyphs">720</text>
<text x="632.1" y="380.01" font-size="12.4" fill="#2e2e2e" textLength="20.7" lengthAdjust="spacingAndGlyphs">600</text>
<text x="706.1" y="380.01" font-size="12.4" fill="#2e2e2e" textLength="20.7" lengthAdjust="spacingAndGlyphs">720</text>
<text x="780.1" y="380.01" font-size="12.4" fill="#2e2e2e" textLength="20.7" lengthAdjust="spacingAndGlyphs">720</text>
<text x="854.1" y="380.01" font-size="12.4" fill="#2e2e2e" textLength="20.7" lengthAdjust="spacingAndGlyphs">600</text>
<text x="928.1" y="380.01" font-size="12.4" fill="#2e2e2e" textLength="20.7" lengthAdjust="spacingAndGlyphs">720</text>
<text x="52.5" y="398.30" font-size="12.4" font-weight="normal" fill="#2e2e2e" textLength="20.7" lengthAdjust="spacingAndGlyphs">483</text>
<text x="255.2" y="398.30" font-size="12.4" fill="#2e2e2e" textLength="27.6" lengthAdjust="spacingAndGlyphs">7080</text>
<text x="336.1" y="398.30" font-size="12.4" fill="#2e2e2e" textLength="20.7" lengthAdjust="spacingAndGlyphs">600</text>
<text x="410.1" y="398.30" font-size="12.4" fill="#2e2e2e" textLength="20.7" lengthAdjust="spacingAndGlyphs">360</text>
<text x="484.1" y="398.30" font-size="12.4" fill="#2e2e2e" textLength="20.7" lengthAdjust="spacingAndGlyphs">720</text>
<text x="558.1" y="398.30" font-size="12.4" fill="#2e2e2e" textLength="20.7" lengthAdjust="spacingAndGlyphs">720</text>
<text x="632.1" y="398.30" font-size="12.4" fill="#2e2e2e" textLength="20.7" lengthAdjust="spacingAndGlyphs">600</text>
<text x="706.1" y="398.30" font-size="12.4" fill="#2e2e2e" textLength="20.7" lengthAdjust="spacingAndGlyphs">720</text>
<text x="780.1" y="398.30" font-size="12.4" fill="#2e2e2e" textLength="20.7" lengthAdjust="spacingAndGlyphs">720</text>
<text x="854.1" y="398.30" font-size="12.4" fill="#2e2e2e" textLength="20.7" lengthAdjust="spacingAndGlyphs">600</text>
<text x="928.1" y="398.30" font-size="12.4" fill="#2e2e2e" textLength="20.7" lengthAdjust="spacingAndGlyphs">720</text>
<text x="42.0" y="416.60" font-size="12" font-weight="bold" fill="#1b1b1b" textLength="67.1" lengthAdjust="spacingAndGlyphs">Bike Stands</text>
<text x="255.2" y="416.60" font-size="12.4" fill="#2e2e2e" textLength="27.6" lengthAdjust="spacingAndGlyphs">9381</text>
<text x="336.1" y="416.60" font-size="12.4" fill="#2e2e2e" textLength="20.7" lengthAdjust="spacingAndGlyphs">954</text>
<text x="410.1" y="416.60" font-size="12.4" fill="#2e2e2e" textLength="20.7" lengthAdjust="spacingAndGlyphs">795</text>
<text x="484.1" y="416.60" font-size="12.4" fill="#2e2e2e" textLength="20.7" lengthAdjust="spacingAndGlyphs">795</text>
<text x="558.1" y="416.60" font-size="12.4" fill="#2e2e2e" textLength="20.7" lengthAdjust="spacingAndGlyphs">477</text>
<text x="632.1" y="416.60" font-size="12.4" fill="#2e2e2e" textLength="20.7" lengthAdjust="spacingAndGlyphs">636</text>
<text x="706.1" y="416.60" font-size="12.4" fill="#2e2e2e" textLength="20.7" lengthAdjust="spacingAndGlyphs">954</text>
<text x="780.1" y="416.60" font-size="12.4" fill="#2e2e2e" textLength="20.7" lengthAdjust="spacingAndGlyphs">795</text>
<text x="854.1" y="416.60" font-size="12.4" fill="#2e2e2e" textLength="20.7" lengthAdjust="spacingAndGlyphs">795</text>
<text x="928.1" y="416.60" font-size="12.4" fill="#2e2e2e" textLength="20.7" lengthAdjust="spacingAndGlyphs">954</text>
<text x="52.5" y="434.90" font-size="12.4" font-weight="normal" fill="#2e2e2e" textLength="20.7" lengthAdjust="spacingAndGlyphs">486</text>
<text x="255.2" y="434.90" font-size="12.4" fill="#2e2e2e" textLength="27.6" lengthAdjust="spacingAndGlyphs">9381</text>
<text x="336.1" y="434.90" font-size="12.4" fill="#2e2e2e" textLength="20.7" lengthAdjust="spacingAndGlyphs">954</text>
<text x="410.1" y="434.90" font-size="12.4" fill="#2e2e2e" textLength="20.7" lengthAdjust="spacingAndGlyphs">795</text>
<text x="484.1" y="434.90" font-size="12.4" fill="#2e2e2e" textLength="20.7" lengthAdjust="spacingAndGlyphs">795</text>
<text x="558.1" y="434.90" font-size="12.4" fill="#2e2e2e" textLength="20.7" lengthAdjust="spacingAndGlyphs">477</text>
<text x="632.1" y="434.90" font-size="12.4" fill="#2e2e2e" textLength="20.7" lengthAdjust="spacingAndGlyphs">636</text>
<text x="706.1" y="434.90" font-size="12.4" fill="#2e2e2e" textLength="20.7" lengthAdjust="spacingAndGlyphs">954</text>
<text x="780.1" y="434.90" font-size="12.4" fill="#2e2e2e" textLength="20.7" lengthAdjust="spacingAndGlyphs">795</text>
<text x="854.1" y="434.90" font-size="12.4" fill="#2e2e2e" textLength="20.7" lengthAdjust="spacingAndGlyphs">795</text>
<text x="928.1" y="434.90" font-size="12.4" fill="#2e2e2e" textLength="20.7" lengthAdjust="spacingAndGlyphs">954</text>
<text x="42.0" y="453.20" font-size="12" font-weight="bold" fill="#1b1b1b" textLength="104.2" lengthAdjust="spacingAndGlyphs">Bottles and Cages</text>
<text x="237.9" y="453.20" font-size="12.4" fill="#2e2e2e" textLength="44.9" lengthAdjust="spacingAndGlyphs">1795.74</text>
<text x="318.8" y="453.20" font-size="12.4" fill="#2e2e2e" textLength="38.0" lengthAdjust="spacingAndGlyphs">148.81</text>
<text x="392.8" y="453.20" font-size="12.4" fill="#2e2e2e" textLength="38.0" lengthAdjust="spacingAndGlyphs">148.81</text>
<text x="466.8" y="453.20" font-size="12.4" fill="#2e2e2e" textLength="38.0" lengthAdjust="spacingAndGlyphs">153.81</text>
<text x="540.8" y="453.20" font-size="12.4" fill="#2e2e2e" textLength="38.0" lengthAdjust="spacingAndGlyphs">148.81</text>
<text x="614.8" y="453.20" font-size="12.4" fill="#2e2e2e" textLength="38.0" lengthAdjust="spacingAndGlyphs">143.82</text>
<text x="688.8" y="453.20" font-size="12.4" fill="#2e2e2e" textLength="38.0" lengthAdjust="spacingAndGlyphs">143.82</text>
<text x="762.8" y="453.20" font-size="12.4" fill="#2e2e2e" textLength="38.0" lengthAdjust="spacingAndGlyphs">168.79</text>
<text x="836.8" y="453.20" font-size="12.4" fill="#2e2e2e" textLength="38.0" lengthAdjust="spacingAndGlyphs">148.81</text>
<text x="910.8" y="453.20" font-size="12.4" fill="#2e2e2e" textLength="38.0" lengthAdjust="spacingAndGlyphs">143.82</text>
<text x="991.7" y="453.20" font-size="12.4" fill="#2e2e2e" textLength="31.1" lengthAdjust="spacingAndGlyphs">158.8</text>
<text x="52.5" y="471.50" font-size="12.4" font-weight="normal" fill="#2e2e2e" textLength="20.7" lengthAdjust="spacingAndGlyphs">477</text>
<text x="244.8" y="471.50" font-size="12.4" fill="#2e2e2e" textLength="38.0" lengthAdjust="spacingAndGlyphs">389.22</text>
<text x="325.7" y="471.50" font-size="12.4" fill="#2e2e2e" textLength="31.1" lengthAdjust="spacingAndGlyphs">34.93</text>
<text x="399.7" y="471.50" font-size="12.4" fill="#2e2e2e" textLength="31.1" lengthAdjust="spacingAndGlyphs">34.93</text>
<text x="473.7" y="471.50" font-size="12.4" fill="#2e2e2e" textLength="31.1" lengthAdjust="spacingAndGlyphs">29.94</text>
<text x="547.7" y="471.50" font-size="12.4" fill="#2e2e2e" textLength="31.1" lengthAdjust="spacingAndGlyphs">34.93</text>
<text x="621.7" y="471.50" font-size="12.4" fill="#2e2e2e" textLength="31.1" lengthAdjust="spacingAndGlyphs">29.94</text>
<text x="695.7" y="471.50" font-size="12.4" fill="#2e2e2e" textLength="31.1" lengthAdjust="spacingAndGlyphs">29.94</text>
<text x="769.7" y="471.50" font-size="12.4" fill="#2e2e2e" textLength="31.1" lengthAdjust="spacingAndGlyphs">34.93</text>
<text x="843.7" y="471.50" font-size="12.4" fill="#2e2e2e" textLength="31.1" lengthAdjust="spacingAndGlyphs">34.93</text>
<text x="917.7" y="471.50" font-size="12.4" fill="#2e2e2e" textLength="31.1" lengthAdjust="spacingAndGlyphs">29.94</text>
<text x="991.7" y="471.50" font-size="12.4" fill="#2e2e2e" textLength="31.1" lengthAdjust="spacingAndGlyphs">34.93</text>
<text x="52.5" y="489.79" font-size="12.4" font-weight="normal" fill="#2e2e2e" textLength="20.7" lengthAdjust="spacingAndGlyphs">478</text>
<text x="244.8" y="489.79" font-size="12.4" fill="#2e2e2e" textLength="38.0" lengthAdjust="spacingAndGlyphs">759.24</text>
<text x="325.7" y="489.79" font-size="12.4" fill="#2e2e2e" textLength="31.1" lengthAdjust="spacingAndGlyphs">59.94</text>
<text x="399.7" y="489.79" font-size="12.4" fill="#2e2e2e" textLength="31.1" lengthAdjust="spacingAndGlyphs">59.94</text>
<text x="473.7" y="489.79" font-size="12.4" fill="#2e2e2e" textLength="31.1" lengthAdjust="spacingAndGlyphs">69.93</text>
<text x="547.7" y="489.79" font-size="12.4" fill="#2e2e2e" textLength="31.1" lengthAdjust="spacingAndGlyphs">59.94</text>
<text x="621.7" y="489.79" font-size="12.4" fill="#2e2e2e" textLength="31.1" lengthAdjust="spacingAndGlyphs">59.94</text>
<text x="695.7" y="489.79" font-size="12.4" fill="#2e2e2e" textLength="31.1" lengthAdjust="spacingAndGlyphs">59.94</text>
<text x="769.7" y="489.79" font-size="12.4" fill="#2e2e2e" textLength="31.1" lengthAdjust="spacingAndGlyphs">79.92</text>
<text x="843.7" y="489.79" font-size="12.4" fill="#2e2e2e" textLength="31.1" lengthAdjust="spacingAndGlyphs">59.94</text>
<text x="917.7" y="489.79" font-size="12.4" fill="#2e2e2e" textLength="31.1" lengthAdjust="spacingAndGlyphs">59.94</text>
<text x="991.7" y="489.79" font-size="12.4" fill="#2e2e2e" textLength="31.1" lengthAdjust="spacingAndGlyphs">69.93</text>
<text x="52.5" y="508.09" font-size="12.4" font-weight="normal" fill="#2e2e2e" textLength="20.7" lengthAdjust="spacingAndGlyphs">479</text>
<text x="244.8" y="508.09" font-size="12.4" fill="#2e2e2e" textLength="38.0" lengthAdjust="spacingAndGlyphs">647.28</text>
<text x="325.7" y="508.09" font-size="12.4" fill="#2e2e2e" textLength="31.1" lengthAdjust="spacingAndGlyphs">53.94</text>
<text x="399.7" y="508.09" font-size="12.4" fill="#2e2e2e" textLength="31.1" lengthAdjust="spacingAndGlyphs">53.94</text>
<text x="473.7" y="508.09" font-size="12.4" fill="#2e2e2e" textLength="31.1" lengthAdjust="spacingAndGlyphs">53.94</text>
<text x="547.7" y="508.09" font-size="12.4" fill="#2e2e2e" textLength="31.1" lengthAdjust="spacingAndGlyphs">53.94</text>
<text x="621.7" y="508.09" font-size="12.4" fill="#2e2e2e" textLength="31.1" lengthAdjust="spacingAndGlyphs">53.94</text>
<text x="695.7" y="508.09" font-size="12.4" fill="#2e2e2e" textLength="31.1" lengthAdjust="spacingAndGlyphs">53.94</text>
<text x="769.7" y="508.09" font-size="12.4" fill="#2e2e2e" textLength="31.1" lengthAdjust="spacingAndGlyphs">53.94</text>
<text x="843.7" y="508.09" font-size="12.4" fill="#2e2e2e" textLength="31.1" lengthAdjust="spacingAndGlyphs">53.94</text>
<text x="917.7" y="508.09" font-size="12.4" fill="#2e2e2e" textLength="31.1" lengthAdjust="spacingAndGlyphs">53.94</text>
<text x="991.7" y="508.09" font-size="12.4" fill="#2e2e2e" textLength="31.1" lengthAdjust="spacingAndGlyphs">53.94</text>
<text x="42.0" y="526.39" font-size="12" font-weight="bold" fill="#1b1b1b" textLength="50.1" lengthAdjust="spacingAndGlyphs">Cleaners</text>
<text x="251.7" y="526.39" font-size="12.4" fill="#2e2e2e" textLength="31.1" lengthAdjust="spacingAndGlyphs">556.5</text>
<text x="332.6" y="526.39" font-size="12.4" fill="#2e2e2e" textLength="24.2" lengthAdjust="spacingAndGlyphs">47.7</text>
<text x="399.7" y="526.39" font-size="12.4" fill="#2e2e2e" textLength="31.1" lengthAdjust="spacingAndGlyphs">39.75</text>
<text x="480.6" y="526.39" font-size="12.4" fill="#2e2e2e" textLength="24.2" lengthAdjust="spacingAndGlyphs">47.7</text>
<text x="554.6" y="526.39" font-size="12.4" fill="#2e2e2e" textLength="24.2" lengthAdjust="spacingAndGlyphs">47.7</text>
<text x="621.7" y="526.39" font-size="12.4" fill="#2e2e2e" textLength="31.1" lengthAdjust="spacingAndGlyphs">39.75</text>
<text x="702.6" y="526.39" font-size="12.4" fill="#2e2e2e" textLength="24.2" lengthAdjust="spacingAndGlyphs">47.7</text>
<text x="776.6" y="526.39" font-size="12.4" fill="#2e2e2e" textLength="24.2" lengthAdjust="spacingAndGlyphs">47.7</text>
<text x="850.6" y="526.39" font-size="12.4" fill="#2e2e2e" textLength="24.2" lengthAdjust="spacingAndGlyphs">47.7</text>
<text x="924.6" y="526.39" font-size="12.4" fill="#2e2e2e" textLength="24.2" lengthAdjust="spacingAndGlyphs">47.7</text>
<text x="998.6" y="526.39" font-size="12.4" fill="#2e2e2e" textLength="24.2" lengthAdjust="spacingAndGlyphs">47.7</text>
<text x="52.5" y="544.69" font-size="12.4" font-weight="normal" fill="#2e2e2e" textLength="20.7" lengthAdjust="spacingAndGlyphs">484</text>
<text x="251.7" y="544.69" font-size="12.4" fill="#2e2e2e" textLength="31.1" lengthAdjust="spacingAndGlyphs">556.5</text>
<text x="332.6" y="544.69" font-size="12.4" fill="#2e2e2e" textLength="24.2" lengthAdjust="spacingAndGlyphs">47.7</text>
<text x="399.7" y="544.69" font-size="12.4" fill="#2e2e2e" textLength="31.1" lengthAdjust="spacingAndGlyphs">39.75</text>
<text x="480.6" y="544.69" font-size="12.4" fill="#2e2e2e" textLength="24.2" lengthAdjust="spacingAndGlyphs">47.7</text>
<text x="554.6" y="544.69" font-size="12.4" fill="#2e2e2e" textLength="24.2" lengthAdjust="spacingAndGlyphs">47.7</text>
<text x="621.7" y="544.69" font-size="12.4" fill="#2e2e2e" textLength="31.1" lengthAdjust="spacingAndGlyphs">39.75</text>
<text x="702.6" y="544.69" font-size="12.4" fill="#2e2e2e" textLength="24.2" lengthAdjust="spacingAndGlyphs">47.7</text>
<text x="776.6" y="544.69" font-size="12.4" fill="#2e2e2e" textLength="24.2" lengthAdjust="spacingAndGlyphs">47.7</text>
<text x="850.6" y="544.69" font-size="12.4" fill="#2e2e2e" textLength="24.2" lengthAdjust="spacingAndGlyphs">47.7</text>
<text x="924.6" y="544.69" font-size="12.4" fill="#2e2e2e" textLength="24.2" lengthAdjust="spacingAndGlyphs">47.7</text>
<text x="998.6" y="544.69" font-size="12.4" fill="#2e2e2e" textLength="24.2" lengthAdjust="spacingAndGlyphs">47.7</text>
<text x="42.0" y="562.99" font-size="12" font-weight="bold" fill="#1b1b1b" textLength="46.3" lengthAdjust="spacingAndGlyphs">Fenders</text>
<text x="237.9" y="562.99" font-size="12.4" fill="#2e2e2e" textLength="44.9" lengthAdjust="spacingAndGlyphs">1670.48</text>
<text x="318.8" y="562.99" font-size="12.4" fill="#2e2e2e" textLength="38.0" lengthAdjust="spacingAndGlyphs">131.88</text>
<text x="392.8" y="562.99" font-size="12.4" fill="#2e2e2e" textLength="38.0" lengthAdjust="spacingAndGlyphs">131.88</text>
<text x="466.8" y="562.99" font-size="12.4" fill="#2e2e2e" textLength="38.0" lengthAdjust="spacingAndGlyphs">153.86</text>
<text x="540.8" y="562.99" font-size="12.4" fill="#2e2e2e" textLength="38.0" lengthAdjust="spacingAndGlyphs">131.88</text>
<text x="614.8" y="562.99" font-size="12.4" fill="#2e2e2e" textLength="38.0" lengthAdjust="spacingAndGlyphs">153.86</text>
<text x="688.8" y="562.99" font-size="12.4" fill="#2e2e2e" textLength="38.0" lengthAdjust="spacingAndGlyphs">131.88</text>
<text x="762.8" y="562.99" font-size="12.4" fill="#2e2e2e" textLength="38.0" lengthAdjust="spacingAndGlyphs">153.86</text>
<text x="836.8" y="562.99" font-size="12.4" fill="#2e2e2e" textLength="38.0" lengthAdjust="spacingAndGlyphs">131.88</text>
<text x="910.8" y="562.99" font-size="12.4" fill="#2e2e2e" textLength="38.0" lengthAdjust="spacingAndGlyphs">131.88</text>
<text x="984.8" y="562.99" font-size="12.4" fill="#2e2e2e" textLength="38.0" lengthAdjust="spacingAndGlyphs">131.88</text>
<text x="52.5" y="581.28" font-size="12.4" font-weight="normal" fill="#2e2e2e" textLength="20.7" lengthAdjust="spacingAndGlyphs">485</text>
<text x="237.9" y="581.28" font-size="12.4" fill="#2e2e2e" textLength="44.9" lengthAdjust="spacingAndGlyphs">1670.48</text>
<text x="318.8" y="581.28" font-size="12.4" fill="#2e2e2e" textLength="38.0" lengthAdjust="spacingAndGlyphs">131.88</text>
<text x="392.8" y="581.28" font-size="12.4" fill="#2e2e2e" textLength="38.0" lengthAdjust="spacingAndGlyphs">131.88</text>
<text x="466.8" y="581.28" font-size="12.4" fill="#2e2e2e" textLength="38.0" lengthAdjust="spacingAndGlyphs">153.86</text>
<text x="540.8" y="581.28" font-size="12.4" fill="#2e2e2e" textLength="38.0" lengthAdjust="spacingAndGlyphs">131.88</text>
<text x="614.8" y="581.28" font-size="12.4" fill="#2e2e2e" textLength="38.0" lengthAdjust="spacingAndGlyphs">153.86</text>
<text x="688.8" y="581.28" font-size="12.4" fill="#2e2e2e" textLength="38.0" lengthAdjust="spacingAndGlyphs">131.88</text>
<text x="762.8" y="581.28" font-size="12.4" fill="#2e2e2e" textLength="38.0" lengthAdjust="spacingAndGlyphs">153.86</text>
<text x="836.8" y="581.28" font-size="12.4" fill="#2e2e2e" textLength="38.0" lengthAdjust="spacingAndGlyphs">131.88</text>
<text x="910.8" y="581.28" font-size="12.4" fill="#2e2e2e" textLength="38.0" lengthAdjust="spacingAndGlyphs">131.88</text>
<text x="984.8" y="581.28" font-size="12.4" fill="#2e2e2e" textLength="38.0" lengthAdjust="spacingAndGlyphs">131.88</text>
<text x="42.0" y="599.58" font-size="12" font-weight="bold" fill="#1b1b1b" textLength="48.4" lengthAdjust="spacingAndGlyphs">Helmets</text>
<text x="237.9" y="599.58" font-size="12.4" fill="#2e2e2e" textLength="44.9" lengthAdjust="spacingAndGlyphs">7767.78</text>
<text x="318.8" y="599.58" font-size="12.4" fill="#2e2e2e" textLength="38.0" lengthAdjust="spacingAndGlyphs">629.82</text>
<text x="392.8" y="599.58" font-size="12.4" fill="#2e2e2e" textLength="38.0" lengthAdjust="spacingAndGlyphs">629.82</text>
<text x="466.8" y="599.58" font-size="12.4" fill="#2e2e2e" textLength="38.0" lengthAdjust="spacingAndGlyphs">629.82</text>
<text x="547.7" y="599.58" font-size="12.4" fill="#2e2e2e" textLength="31.1" lengthAdjust="spacingAndGlyphs">699.8</text>
<text x="614.8" y="599.58" font-size="12.4" fill="#2e2e2e" textLength="38.0" lengthAdjust="spacingAndGlyphs">629.82</text>
<text x="688.8" y="599.58" font-size="12.4" fill="#2e2e2e" textLength="38.0" lengthAdjust="spacingAndGlyphs">664.81</text>
<text x="762.8" y="599.58" font-size="12.4" fill="#2e2e2e" textLength="38.0" lengthAdjust="spacingAndGlyphs">629.82</text>
<text x="836.8" y="599.58" font-size="12.4" fill="#2e2e2e" textLength="38.0" lengthAdjust="spacingAndGlyphs">664.81</text>
<text x="910.8" y="599.58" font-size="12.4" fill="#2e2e2e" textLength="38.0" lengthAdjust="spacingAndGlyphs">664.81</text>
<text x="984.8" y="599.58" font-size="12.4" fill="#2e2e2e" textLength="38.0" lengthAdjust="spacingAndGlyphs">629.82</text>
<text x="52.5" y="617.88" font-size="12.4" font-weight="normal" fill="#2e2e2e" textLength="20.7" lengthAdjust="spacingAndGlyphs">214</text>
<text x="237.9" y="617.88" font-size="12.4" fill="#2e2e2e" textLength="44.9" lengthAdjust="spacingAndGlyphs">2589.26</text>
<text x="318.8" y="617.88" font-size="12.4" fill="#2e2e2e" textLength="38.0" lengthAdjust="spacingAndGlyphs">209.94</text>
<text x="392.8" y="617.88" font-size="12.4" fill="#2e2e2e" textLength="38.0" lengthAdjust="spacingAndGlyphs">209.94</text>
<text x="466.8" y="617.88" font-size="12.4" fill="#2e2e2e" textLength="38.0" lengthAdjust="spacingAndGlyphs">209.94</text>
<text x="540.8" y="617.88" font-size="12.4" fill="#2e2e2e" textLength="38.0" lengthAdjust="spacingAndGlyphs">209.94</text>
<text x="614.8" y="617.88" font-size="12.4" fill="#2e2e2e" textLength="38.0" lengthAdjust="spacingAndGlyphs">209.94</text>
<text x="688.8" y="617.88" font-size="12.4" fill="#2e2e2e" textLength="38.0" lengthAdjust="spacingAndGlyphs">209.94</text>
<text x="762.8" y="617.88" font-size="12.4" fill="#2e2e2e" textLength="38.0" lengthAdjust="spacingAndGlyphs">209.94</text>
<text x="836.8" y="617.88" font-size="12.4" fill="#2e2e2e" textLength="38.0" lengthAdjust="spacingAndGlyphs">209.94</text>
<text x="910.8" y="617.88" font-size="12.4" fill="#2e2e2e" textLength="38.0" lengthAdjust="spacingAndGlyphs">244.93</text>
<text x="984.8" y="617.88" font-size="12.4" fill="#2e2e2e" textLength="38.0" lengthAdjust="spacingAndGlyphs">209.94</text>
<text x="52.5" y="636.18" font-size="12.4" font-weight="normal" fill="#2e2e2e" textLength="20.7" lengthAdjust="spacingAndGlyphs">217</text>
<text x="237.9" y="636.18" font-size="12.4" fill="#2e2e2e" textLength="44.9" lengthAdjust="spacingAndGlyphs">2589.26</text>
<text x="318.8" y="636.18" font-size="12.4" fill="#2e2e2e" textLength="38.0" lengthAdjust="spacingAndGlyphs">209.94</text>
<text x="392.8" y="636.18" font-size="12.4" fill="#2e2e2e" textLength="38.0" lengthAdjust="spacingAndGlyphs">209.94</text>
<text x="466.8" y="636.18" font-size="12.4" fill="#2e2e2e" textLength="38.0" lengthAdjust="spacingAndGlyphs">209.94</text>
<text x="540.8" y="636.18" font-size="12.4" fill="#2e2e2e" textLength="38.0" lengthAdjust="spacingAndGlyphs">244.93</text>
<text x="614.8" y="636.18" font-size="12.4" fill="#2e2e2e" textLength="38.0" lengthAdjust="spacingAndGlyphs">209.94</text>
<text x="688.8" y="636.18" font-size="12.4" fill="#2e2e2e" textLength="38.0" lengthAdjust="spacingAndGlyphs">244.93</text>
<text x="762.8" y="636.18" font-size="12.4" fill="#2e2e2e" textLength="38.0" lengthAdjust="spacingAndGlyphs">209.94</text>
<text x="836.8" y="636.18" font-size="12.4" fill="#2e2e2e" textLength="38.0" lengthAdjust="spacingAndGlyphs">209.94</text>
<text x="910.8" y="636.18" font-size="12.4" fill="#2e2e2e" textLength="38.0" lengthAdjust="spacingAndGlyphs">209.94</text>
<text x="984.8" y="636.18" font-size="12.4" fill="#2e2e2e" textLength="38.0" lengthAdjust="spacingAndGlyphs">209.94</text>
<text x="52.5" y="654.48" font-size="12.4" font-weight="normal" fill="#2e2e2e" textLength="20.7" lengthAdjust="spacingAndGlyphs">222</text>
<text x="237.9" y="654.48" font-size="12.4" fill="#2e2e2e" textLength="44.9" lengthAdjust="spacingAndGlyphs">2589.26</text>
<text x="318.8" y="654.48" font-size="12.4" fill="#2e2e2e" textLength="38.0" lengthAdjust="spacingAndGlyphs">209.94</text>
<text x="392.8" y="654.48" font-size="12.4" fill="#2e2e2e" textLength="38.0" lengthAdjust="spacingAndGlyphs">209.94</text>
<text x="466.8" y="654.48" font-size="12.4" fill="#2e2e2e" textLength="38.0" lengthAdjust="spacingAndGlyphs">209.94</text>
<text x="540.8" y="654.48" font-size="12.4" fill="#2e2e2e" textLength="38.0" lengthAdjust="spacingAndGlyphs">244.93</text>
<text x="614.8" y="654.48" font-size="12.4" fill="#2e2e2e" textLength="38.0" lengthAdjust="spacingAndGlyphs">209.94</text>
<text x="688.8" y="654.48" font-size="12.4" fill="#2e2e2e" textLength="38.0" lengthAdjust="spacingAndGlyphs">209.94</text>
<text x="762.8" y="654.48" font-size="12.4" fill="#2e2e2e" textLength="38.0" lengthAdjust="spacingAndGlyphs">209.94</text>
<text x="836.8" y="654.48" font-size="12.4" fill="#2e2e2e" textLength="38.0" lengthAdjust="spacingAndGlyphs">244.93</text>
<text x="910.8" y="654.48" font-size="12.4" fill="#2e2e2e" textLength="38.0" lengthAdjust="spacingAndGlyphs">209.94</text>
<text x="984.8" y="654.48" font-size="12.4" fill="#2e2e2e" textLength="38.0" lengthAdjust="spacingAndGlyphs">209.94</text>
<text x="42.0" y="672.77" font-size="12" font-weight="bold" fill="#1b1b1b" textLength="96.4" lengthAdjust="spacingAndGlyphs">Hydration Packs</text>
<text x="237.9" y="672.77" font-size="12.4" fill="#2e2e2e" textLength="44.9" lengthAdjust="spacingAndGlyphs">3684.33</text>
<text x="318.8" y="672.77" font-size="12.4" fill="#2e2e2e" textLength="38.0" lengthAdjust="spacingAndGlyphs">329.94</text>
<text x="392.8" y="672.77" font-size="12.4" fill="#2e2e2e" textLength="38.0" lengthAdjust="spacingAndGlyphs">274.95</text>
<text x="466.8" y="672.77" font-size="12.4" fill="#2e2e2e" textLength="38.0" lengthAdjust="spacingAndGlyphs">329.94</text>
<text x="540.8" y="672.77" font-size="12.4" fill="#2e2e2e" textLength="38.0" lengthAdjust="spacingAndGlyphs">274.95</text>
<text x="614.8" y="672.77" font-size="12.4" fill="#2e2e2e" textLength="38.0" lengthAdjust="spacingAndGlyphs">274.95</text>
<text x="688.8" y="672.77" font-size="12.4" fill="#2e2e2e" textLength="38.0" lengthAdjust="spacingAndGlyphs">274.95</text>
<text x="762.8" y="672.77" font-size="12.4" fill="#2e2e2e" textLength="38.0" lengthAdjust="spacingAndGlyphs">329.94</text>
<text x="836.8" y="672.77" font-size="12.4" fill="#2e2e2e" textLength="38.0" lengthAdjust="spacingAndGlyphs">329.94</text>
<text x="910.8" y="672.77" font-size="12.4" fill="#2e2e2e" textLength="38.0" lengthAdjust="spacingAndGlyphs">274.95</text>
<text x="984.8" y="672.77" font-size="12.4" fill="#2e2e2e" textLength="38.0" lengthAdjust="spacingAndGlyphs">329.94</text>
<text x="52.5" y="691.07" font-size="12.4" font-weight="normal" fill="#2e2e2e" textLength="20.7" lengthAdjust="spacingAndGlyphs">487</text>
<text x="237.9" y="691.07" font-size="12.4" fill="#2e2e2e" textLength="44.9" lengthAdjust="spacingAndGlyphs">3684.33</text>
<text x="318.8" y="691.07" font-size="12.4" fill="#2e2e2e" textLength="38.0" lengthAdjust="spacingAndGlyphs">329.94</text>
<text x="392.8" y="691.07" font-size="12.4" fill="#2e2e2e" textLength="38.0" lengthAdjust="spacingAndGlyphs">274.95</text>
<text x="466.8" y="691.07" font-size="12.4" fill="#2e2e2e" textLength="38.0" lengthAdjust="spacingAndGlyphs">329.94</text>
<text x="540.8" y="691.07" font-size="12.4" fill="#2e2e2e" textLength="38.0" lengthAdjust="spacingAndGlyphs">274.95</text>
<text x="614.8" y="691.07" font-size="12.4" fill="#2e2e2e" textLength="38.0" lengthAdjust="spacingAndGlyphs">274.95</text>
<text x="688.8" y="691.07" font-size="12.4" fill="#2e2e2e" textLength="38.0" lengthAdjust="spacingAndGlyphs">274.95</text>
<text x="762.8" y="691.07" font-size="12.4" fill="#2e2e2e" textLength="38.0" lengthAdjust="spacingAndGlyphs">329.94</text>
<text x="836.8" y="691.07" font-size="12.4" fill="#2e2e2e" textLength="38.0" lengthAdjust="spacingAndGlyphs">329.94</text>
<text x="910.8" y="691.07" font-size="12.4" fill="#2e2e2e" textLength="38.0" lengthAdjust="spacingAndGlyphs">274.95</text>
<text x="984.8" y="691.07" font-size="12.4" fill="#2e2e2e" textLength="38.0" lengthAdjust="spacingAndGlyphs">329.94</text>
<text x="42.0" y="709.37" font-size="12" font-weight="bold" fill="#1b1b1b" textLength="92.2" lengthAdjust="spacingAndGlyphs">Tires and Tubes</text>
<text x="231.0" y="709.37" font-size="12.4" fill="#2e2e2e" textLength="51.8" lengthAdjust="spacingAndGlyphs">15543.03</text>
<text x="311.9" y="709.37" font-size="12.4" fill="#2e2e2e" textLength="44.9" lengthAdjust="spacingAndGlyphs">1285.86</text>
<text x="385.9" y="709.37" font-size="12.4" fill="#2e2e2e" textLength="44.9" lengthAdjust="spacingAndGlyphs">1303.15</text>
<text x="459.9" y="709.37" font-size="12.4" fill="#2e2e2e" textLength="44.9" lengthAdjust="spacingAndGlyphs">1285.86</text>
<text x="533.9" y="709.37" font-size="12.4" fill="#2e2e2e" textLength="44.9" lengthAdjust="spacingAndGlyphs">1288.15</text>
<text x="607.9" y="709.37" font-size="12.4" fill="#2e2e2e" textLength="44.9" lengthAdjust="spacingAndGlyphs">1372.34</text>
<text x="681.9" y="709.37" font-size="12.4" fill="#2e2e2e" textLength="44.9" lengthAdjust="spacingAndGlyphs">1253.26</text>
<text x="755.9" y="709.37" font-size="12.4" fill="#2e2e2e" textLength="44.9" lengthAdjust="spacingAndGlyphs">1270.85</text>
<text x="829.9" y="709.37" font-size="12.4" fill="#2e2e2e" textLength="44.9" lengthAdjust="spacingAndGlyphs">1285.86</text>
<text x="903.9" y="709.37" font-size="12.4" fill="#2e2e2e" textLength="44.9" lengthAdjust="spacingAndGlyphs">1332.24</text>
<text x="977.9" y="709.37" font-size="12.4" fill="#2e2e2e" textLength="44.9" lengthAdjust="spacingAndGlyphs">1249.15</text>
<text x="52.5" y="727.67" font-size="12.4" font-weight="normal" fill="#2e2e2e" textLength="20.7" lengthAdjust="spacingAndGlyphs">480</text>
<text x="244.8" y="727.67" font-size="12.4" fill="#2e2e2e" textLength="38.0" lengthAdjust="spacingAndGlyphs">169.46</text>
<text x="325.7" y="727.67" font-size="12.4" fill="#2e2e2e" textLength="31.1" lengthAdjust="spacingAndGlyphs">13.74</text>
<text x="399.7" y="727.67" font-size="12.4" fill="#2e2e2e" textLength="31.1" lengthAdjust="spacingAndGlyphs">16.03</text>
<text x="473.7" y="727.67" font-size="12.4" fill="#2e2e2e" textLength="31.1" lengthAdjust="spacingAndGlyphs">13.74</text>
<text x="547.7" y="727.67" font-size="12.4" fill="#2e2e2e" textLength="31.1" lengthAdjust="spacingAndGlyphs">16.03</text>
<text x="621.7" y="727.67" font-size="12.4" fill="#2e2e2e" textLength="31.1" lengthAdjust="spacingAndGlyphs">13.74</text>
<text x="695.7" y="727.67" font-size="12.4" fill="#2e2e2e" textLength="31.1" lengthAdjust="spacingAndGlyphs">13.74</text>
<text x="769.7" y="727.67" font-size="12.4" fill="#2e2e2e" textLength="31.1" lengthAdjust="spacingAndGlyphs">13.74</text>
<text x="843.7" y="727.67" font-size="12.4" fill="#2e2e2e" textLength="31.1" lengthAdjust="spacingAndGlyphs">13.74</text>
<text x="917.7" y="727.67" font-size="12.4" fill="#2e2e2e" textLength="31.1" lengthAdjust="spacingAndGlyphs">13.74</text>
<text x="991.7" y="727.67" font-size="12.4" fill="#2e2e2e" textLength="31.1" lengthAdjust="spacingAndGlyphs">16.03</text>
<text x="52.5" y="745.97" font-size="12.4" font-weight="normal" fill="#2e2e2e" textLength="20.7" lengthAdjust="spacingAndGlyphs">528</text>
<text x="244.8" y="745.97" font-size="12.4" fill="#2e2e2e" textLength="38.0" lengthAdjust="spacingAndGlyphs">384.23</text>
<text x="325.7" y="745.97" font-size="12.4" fill="#2e2e2e" textLength="31.1" lengthAdjust="spacingAndGlyphs">29.94</text>
<text x="399.7" y="745.97" font-size="12.4" fill="#2e2e2e" textLength="31.1" lengthAdjust="spacingAndGlyphs">34.93</text>
<text x="473.7" y="745.97" font-size="12.4" fill="#2e2e2e" textLength="31.1" lengthAdjust="spacingAndGlyphs">29.94</text>
<text x="547.7" y="745.97" font-size="12.4" fill="#2e2e2e" textLength="31.1" lengthAdjust="spacingAndGlyphs">29.94</text>
<text x="621.7" y="745.97" font-size="12.4" fill="#2e2e2e" textLength="31.1" lengthAdjust="spacingAndGlyphs">29.94</text>
<text x="695.7" y="745.97" font-size="12.4" fill="#2e2e2e" textLength="31.1" lengthAdjust="spacingAndGlyphs">29.94</text>
<text x="769.7" y="745.97" font-size="12.4" fill="#2e2e2e" textLength="31.1" lengthAdjust="spacingAndGlyphs">39.92</text>
<text x="843.7" y="745.97" font-size="12.4" fill="#2e2e2e" textLength="31.1" lengthAdjust="spacingAndGlyphs">29.94</text>
<text x="917.7" y="745.97" font-size="12.4" fill="#2e2e2e" textLength="31.1" lengthAdjust="spacingAndGlyphs">34.93</text>
<text x="991.7" y="745.97" font-size="12.4" fill="#2e2e2e" textLength="31.1" lengthAdjust="spacingAndGlyphs">29.94</text>
<text x="52.5" y="764.26" font-size="12.4" font-weight="normal" fill="#2e2e2e" textLength="20.7" lengthAdjust="spacingAndGlyphs">529</text>
<text x="244.8" y="764.26" font-size="12.4" fill="#2e2e2e" textLength="38.0" lengthAdjust="spacingAndGlyphs">295.26</text>
<text x="325.7" y="764.26" font-size="12.4" fill="#2e2e2e" textLength="31.1" lengthAdjust="spacingAndGlyphs">23.94</text>
<text x="399.7" y="764.26" font-size="12.4" fill="#2e2e2e" textLength="31.1" lengthAdjust="spacingAndGlyphs">23.94</text>
<text x="473.7" y="764.26" font-size="12.4" fill="#2e2e2e" textLength="31.1" lengthAdjust="spacingAndGlyphs">23.94</text>
<text x="547.7" y="764.26" font-size="12.4" fill="#2e2e2e" textLength="31.1" lengthAdjust="spacingAndGlyphs">23.94</text>
<text x="621.7" y="764.26" font-size="12.4" fill="#2e2e2e" textLength="31.1" lengthAdjust="spacingAndGlyphs">23.94</text>
<text x="695.7" y="764.26" font-size="12.4" fill="#2e2e2e" textLength="31.1" lengthAdjust="spacingAndGlyphs">23.94</text>
<text x="769.7" y="764.26" font-size="12.4" fill="#2e2e2e" textLength="31.1" lengthAdjust="spacingAndGlyphs">23.94</text>
<text x="843.7" y="764.26" font-size="12.4" fill="#2e2e2e" textLength="31.1" lengthAdjust="spacingAndGlyphs">23.94</text>
<text x="917.7" y="764.26" font-size="12.4" fill="#2e2e2e" textLength="31.1" lengthAdjust="spacingAndGlyphs">27.93</text>
<text x="991.7" y="764.26" font-size="12.4" fill="#2e2e2e" textLength="31.1" lengthAdjust="spacingAndGlyphs">23.94</text>
</svg></body></html>
